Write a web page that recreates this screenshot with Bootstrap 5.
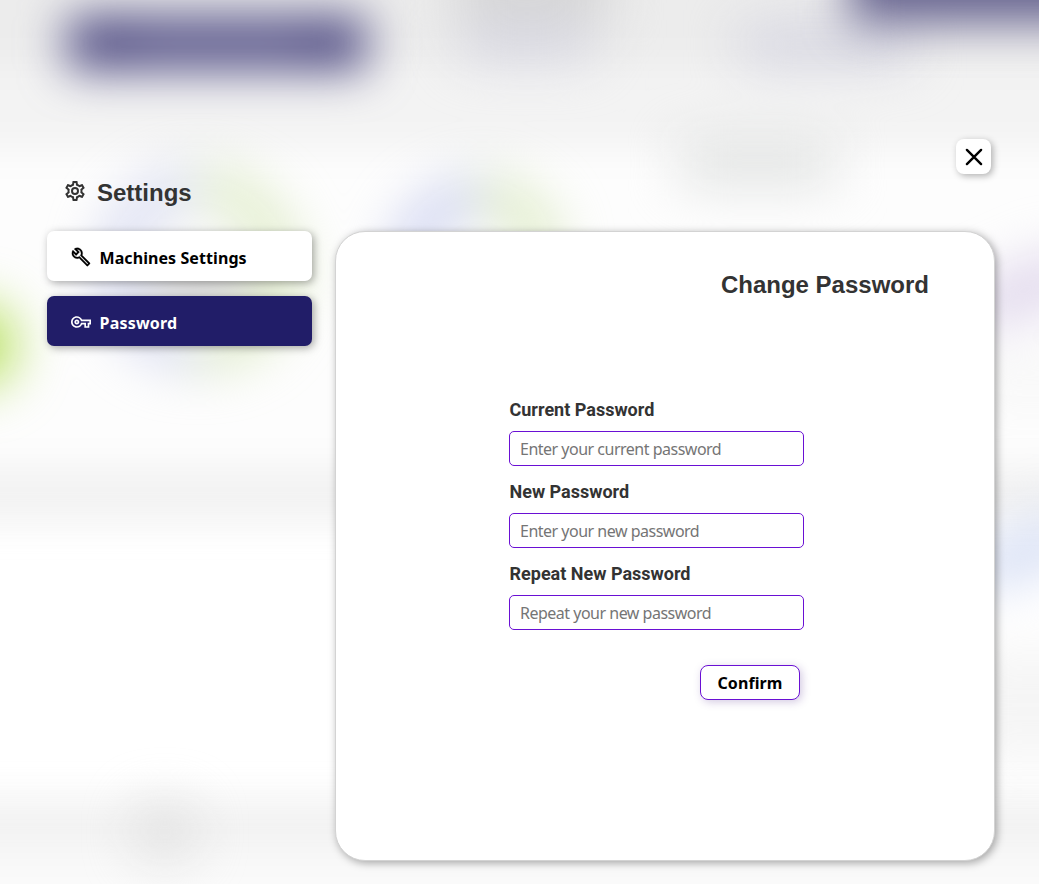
<!DOCTYPE html>
<html lang="en">
<head>
<meta charset="utf-8">
<meta name="viewport" content="width=device-width, initial-scale=1">
<title>Settings - Change Password</title>
<link href="https://cdn.jsdelivr.net/npm/bootstrap@5.3.0/dist/css/bootstrap.min.css" rel="stylesheet">
<style>
body{background:#fff;font-family:"Noto Sans",sans-serif;font-size:16px;color:#000;overflow:hidden}
.backdrop-art{position:absolute;inset:0;z-index:-1;width:1039px;height:884px}
.settings-dialog{height:884px;padding:139px 44px 0 47px}
.close-btn{width:35px;height:35px;margin-right:4px;border-radius:8px;background:#fff;box-shadow:2px 2px 7px rgba(0,0,0,.3)}
.side-menu{width:265px;margin-top:3px}
.dialog-title{font:700 24px/28px "Liberation Sans",Arial,sans-serif;color:#333}
.side-title{height:30px;margin-bottom:24px;padding:2px 0 0 18px}
.side-title svg{margin:-5px 12px 0 0}
.menu-item{width:265px;height:50px;padding:3px 24px 0;margin-bottom:15px;border-radius:7px;background:#fff;color:#000;font-weight:700;box-shadow:2px 2px 8px rgba(0,0,0,.34);gap:8.5px}
.menu-item svg{margin-top:-1px}
.menu-item.current{background:#211d68;color:#fff}
.bold-fit{letter-spacing:.08px}
.current .bold-fit{letter-spacing:.2px}
.panel{width:660px;height:630px;margin-top:57px;border:1px solid #d3d3d3;border-radius:30px;background:#fff;box-shadow:2px 2px 8px rgba(0,0,0,.34)}
.panel-heading{padding:39px 65px 0 0}
.pw-form{width:295px;margin:98px 0 0 173px}
.pw-label{font:700 18px/24px Roboto,sans-serif;color:#333;height:34px;padding:1px 0 0 .5px;margin:0}
.pw-input{height:35px;border:1px solid #6a10d4;border-radius:5px;padding:0 10px;margin-bottom:13px;color:#333;font-size:16px;letter-spacing:-.5px;box-shadow:none;transition:none}
.pw-input::placeholder{color:#757575;opacity:1}
.confirm-btn{width:100px;height:35px;margin:22px 4px 0 0;border:1px solid #6a10d4;border-radius:8px;background:#fff;color:#000;font-weight:700;padding:1px 0 0;box-shadow:2px 2px 8px rgba(80,40,140,.25);transition:none}
</style>
</head>
<body>
<svg class="backdrop-art" viewBox="0 0 1039 884" aria-hidden="true">
  <defs>
    <filter id="bands" x="-200" y="-200" width="1439" height="1284" filterUnits="userSpaceOnUse" color-interpolation-filters="sRGB"><feGaussianBlur stdDeviation="18"/></filter>
    <filter id="soft" x="-200" y="-200" width="1439" height="1284" filterUnits="userSpaceOnUse" color-interpolation-filters="sRGB"><feGaussianBlur stdDeviation="26"/></filter>
    <filter id="mid" x="-200" y="-200" width="1439" height="1284" filterUnits="userSpaceOnUse" color-interpolation-filters="sRGB"><feGaussianBlur stdDeviation="23"/></filter>
  </defs>
  <g filter="url(#bands)">
    <rect x="-200" y="-200" width="1439" height="264" fill="#ececec"/>
    <rect x="-200" y="64" width="1439" height="86" fill="#f3f3f3"/>
    <rect x="-200" y="150" width="1439" height="317" fill="#fdfdfd"/>
    <rect x="-200" y="467" width="1439" height="56" fill="#f2f2f2"/>
    <rect x="-200" y="798" width="1439" height="52" fill="#f2f2f2"/>
    <rect x="-200" y="850" width="1439" height="200" fill="#fafafa"/>
  </g>
  <g filter="url(#soft)">
    <rect x="455" y="-60" width="155" height="80" fill="#d6d6d6"/>
    <rect x="462" y="22" width="130" height="36" fill="#d6d6e2"/>
    <rect x="740" y="26" width="170" height="36" fill="#d3d3e0"/>
    <rect x="680" y="142" width="155" height="42" fill="#dfe1e0"/>
    <circle cx="165" cy="832" r="27" fill="#dcdcdc"/>
    <path d="M198 185 A84 84 0 0 0 198 353" fill="none" stroke="#c6cbeb" stroke-width="24"/>
    <path d="M198 185 A84 84 0 0 1 198 353" fill="none" stroke="#cfe3aa" stroke-width="24"/>
    <rect x="150" y="272" width="100" height="26" fill="#aaa"/>
    <path d="M480 196 A74 74 0 0 0 406 270" fill="none" stroke="#bfc5ec" stroke-width="28"/>
    <path d="M480 194 A64 64 0 0 1 544 262" fill="none" stroke="#d3e5b2" stroke-width="28"/>
    <circle cx="-26" cy="345" r="42" fill="#b5df5a"/>
    <path d="M975 312 L1075 268" stroke="#ddd3ea" stroke-width="44"/>
    <path d="M975 574 L1075 530" stroke="#d2dbf3" stroke-width="44"/>
    <rect x="960" y="360" width="150" height="30" fill="#f5f5f5"/>
    <rect x="960" y="650" width="150" height="110" fill="#f5f5f5"/>
  </g>
  <g filter="url(#mid)">
    <rect x="66" y="15" width="302" height="56" rx="8" fill="#605d8f"/>
    <circle cx="114" cy="43" r="23" fill="#524e84"/>
    <circle cx="322" cy="43" r="23" fill="#524e84"/>
    <rect x="850" y="-80" width="280" height="103" fill="#66638f"/>
  </g>
</svg>

<main class="settings-dialog d-flex flex-column">
  <div class="d-flex justify-content-end">
    <button class="close-btn btn p-0 border-0 d-flex align-items-center justify-content-center" type="button" aria-label="Close">
      <svg width="35" height="35" viewBox="0 0 35 35" fill="none" stroke="#000" stroke-width="2.4" stroke-linecap="round"><path d="M10.9 10.9 25.1 25.1M25.1 10.9 10.9 25.1"/></svg>
    </button>
  </div>
  <div class="d-flex justify-content-between">
    <aside class="side-menu">
      <h1 class="dialog-title side-title d-flex align-items-center">
        <svg width="20" height="20" viewBox="2 2 20 20" fill="#333"><path d="M19.43 12.98c.04-.32.07-.64.07-.98 0-.34-.03-.66-.07-.98l2.11-1.65c.19-.15.24-.42.12-.64l-2-3.46c-.12-.22-.39-.3-.61-.22l-2.49 1c-.52-.4-1.08-.73-1.69-.98l-.38-2.65C14.46 2.18 14.25 2 14 2h-4c-.25 0-.46.18-.49.42l-.38 2.65c-.61.25-1.17.59-1.69.98l-2.49-1c-.23-.09-.49 0-.61.22l-2 3.46c-.13.22-.07.49.12.64l2.11 1.65c-.04.32-.07.65-.07.98s.03.66.07.98l-2.11 1.65c-.19.15-.24.42-.12.64l2 3.46c.12.22.39.3.61.22l2.49-1c.52.4 1.08.73 1.69.98l.38 2.65c.03.24.24.42.49.42h4c.25 0 .46-.18.49-.42l.38-2.65c.61-.25 1.17-.59 1.69-.98l2.49 1c.23.09.49 0 .61-.22l2-3.46c.12-.22.07-.49-.12-.64zm-1.98-1.71c.04.31.05.52.05.73s-.02.43-.05.73l-.14 1.13.89.7 1.08.84-.7 1.21-1.27-.51-1.04-.42-.9.68c-.43.32-.84.56-1.25.73l-1.06.43-.16 1.13-.2 1.35h-1.4l-.35-2.48-1.06-.43c-.43-.18-.83-.41-1.23-.71l-.91-.7-1.06.43-1.27.51-.7-1.21 1.08-.84.89-.7-.14-1.13c-.03-.31-.05-.54-.05-.74s.02-.43.05-.73l.14-1.13-.89-.7-1.08-.84.7-1.21 1.27.51 1.04.42.9-.68c.43-.32.84-.56 1.25-.73l1.06-.43.16-1.13.2-1.35h1.39l.35 2.48 1.06.43c.43.18.83.41 1.23.71l.91.7 1.06-.43 1.27-.51.7 1.21-1.07.85-.89.7zM12 8a4 4 0 1 0 0 8 4 4 0 0 0 0-8zm0 6a2 2 0 1 1 0-4 2 2 0 0 1 0 4z"/></svg>
        Settings
      </h1>
      <nav>
        <a class="menu-item d-flex align-items-center text-decoration-none" href="#">
          <svg width="20" height="20" viewBox="0 0 24 24" fill="currentColor" stroke="currentColor" stroke-width=".3"><path d="M22.61 18.99l-9.08-9.08c.93-2.34.45-5.1-1.44-7C9.79.61 6.21.4 3.66 2.26L7.5 6.11 6.08 7.52 2.25 3.69C.39 6.23.6 9.82 2.9 12.11c1.86 1.86 4.57 2.35 6.89 1.48l9.11 9.11c.39.39 1.02.39 1.41 0l2.3-2.3c.4-.38.4-1.01 0-1.41zm-3 1.6l-9.46-9.46c-.61.45-1.29.72-2 .82-1.36.2-2.79-.21-3.83-1.25C3.37 9.76 2.93 8.5 3 7.26l3.09 3.09 4.24-4.24-3.09-3.09c1.24-.07 2.49.37 3.44 1.31 1.08 1.08 1.49 2.57 1.24 3.96-.12.71-.42 1.37-.88 1.96l9.45 9.45-.88.89z"/></svg>
          <span class="bold-fit">Machines Settings</span>
        </a>
        <a class="menu-item current d-flex align-items-center text-decoration-none" href="#" aria-current="page">
          <svg width="20" height="20" viewBox="0 0 24 24" fill="currentColor"><path d="M22 19h-6v-4h-2.68c-1.14 2.42-3.6 4-6.32 4-3.86 0-7-3.14-7-7s3.14-7 7-7c2.72 0 5.17 1.58 6.32 4H24v6h-2v4zm-4-2h2v-4h2v-2H11.94l-.23-.67C11.01 8.34 9.11 7 7 7c-2.76 0-5 2.24-5 5s2.24 5 5 5c2.11 0 4.01-1.34 4.71-3.33l.23-.67H18v4zM7 15c-1.65 0-3-1.35-3-3s1.35-3 3-3 3 1.35 3 3-1.35 3-3 3zm0-4c-.55 0-1 .45-1 1s.45 1 1 1 1-.45 1-1-.45-1-1-1z"/></svg>
          <span class="bold-fit">Password</span>
        </a>
      </nav>
    </aside>
    <section class="panel">
      <h2 class="dialog-title panel-heading text-end mb-0">Change Password</h2>
      <form class="pw-form">
        <label class="pw-label d-block" for="cur">Current Password</label>
        <input class="form-control pw-input" id="cur" type="text" placeholder="Enter your current password">
        <label class="pw-label d-block" for="new">New Password</label>
        <input class="form-control pw-input" id="new" type="text" placeholder="Enter your new password">
        <label class="pw-label d-block" for="rep">Repeat New Password</label>
        <input class="form-control pw-input" id="rep" type="text" placeholder="Repeat your new password">
        <div class="d-flex justify-content-end">
          <button class="btn confirm-btn bold-fit" type="button">Confirm</button>
        </div>
      </form>
    </section>
  </div>
</main>
<script src="https://cdn.jsdelivr.net/npm/bootstrap@5.3.0/dist/js/bootstrap.bundle.min.js"></script>
</body>
</html>
